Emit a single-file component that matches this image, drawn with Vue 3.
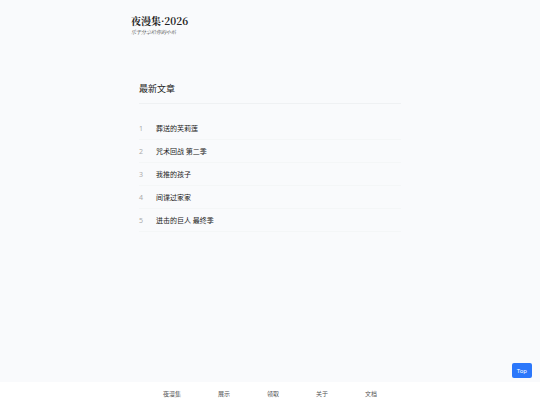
<script setup>
import {ref} from 'vue';

const posts = ref([
  '葬送的芙莉莲',
  '咒术回战 第二季',
  '我推的孩子',
  '间谍过家家',
  '进击的巨人 最终季'
]);

const links = ['夜漫集', '展示', '领取', '关于', '文档'];

const toTop = () => {
  window.scrollTo({top: 0, behavior: 'smooth'});
};
</script>

<template>
  <div class="page">
    <div class="container">
      <header class="header">
        <h1 class="logo">夜漫集·2026</h1>
        <p class="slogan">乐于分享给你的小站</p>
      </header>
      <main class="content">
        <h2 class="title">最新文章</h2>
        <ul class="list">
          <li v-for="(post, index) in posts" :key="post" class="item">
            <span class="index">{{ index + 1 }}</span>
            <a href="#" class="link">{{ post }}</a>
          </li>
        </ul>
      </main>
    </div>
    <button type="button" class="top" @click="toTop">Top</button>
    <nav class="nav">
      <a v-for="link in links" :key="link" href="#" class="nav-link">{{ link }}</a>
    </nav>
  </div>
</template>

<style>
body {
  margin: 0;
  background: #f9fafc;
}
</style>

<style scoped>
.page {
  min-height: 100vh;
  display: flex;
  flex-direction: column;
  background: #f9fafc;
  color: #222;
  font-family: "Noto Sans", "Noto Sans CJK SC", sans-serif;
}

.container {
  flex: 1;
  width: 100%;
  max-width: 278px;
  margin: 0 auto;
}

.header {
  padding-top: 14px;
  font-family: "Noto Serif CJK SC", "Noto Serif SC", "Liberation Serif", "Noto Sans CJK SC", serif;
}

.logo {
  margin: 0;
  font-size: 10px;
  line-height: 14px;
  font-weight: bold;
}

.slogan {
  margin: 0;
  font-size: 5px;
  line-height: 8px;
  font-style: italic;
  color: #333;
}

.content {
  padding: 44px 8px 0;
}

.title {
  margin: 0;
  padding-bottom: 5px;
  border-bottom: 1px solid #eff1f3;
  font-size: 9px;
  line-height: 18px;
  font-weight: normal;
}

.list {
  margin: 13px 0 0;
  padding: 0;
  list-style: none;
}

.item {
  display: flex;
  align-items: center;
  height: 22px;
  border-bottom: 1px solid #f4f6f7;
}

.index {
  width: 17px;
  font-size: 7px;
  color: #aaa;
}

.link {
  color: #222;
  font-size: 7px;
  text-decoration: none;
}

.top {
  position: fixed;
  right: 8px;
  bottom: 27px;
  padding: 0 5px;
  height: 15px;
  border: none;
  border-radius: 2px;
  background: #2b77fb;
  color: #fff;
  font-family: inherit;
  font-size: 6px;
  cursor: pointer;
}

.nav {
  position: sticky;
  bottom: 0;
  display: flex;
  justify-content: center;
  align-items: center;
  gap: 37px;
  height: 23px;
  background: #fff;
}

.nav-link {
  color: #555;
  font-size: 6px;
  text-decoration: none;
}
</style>
